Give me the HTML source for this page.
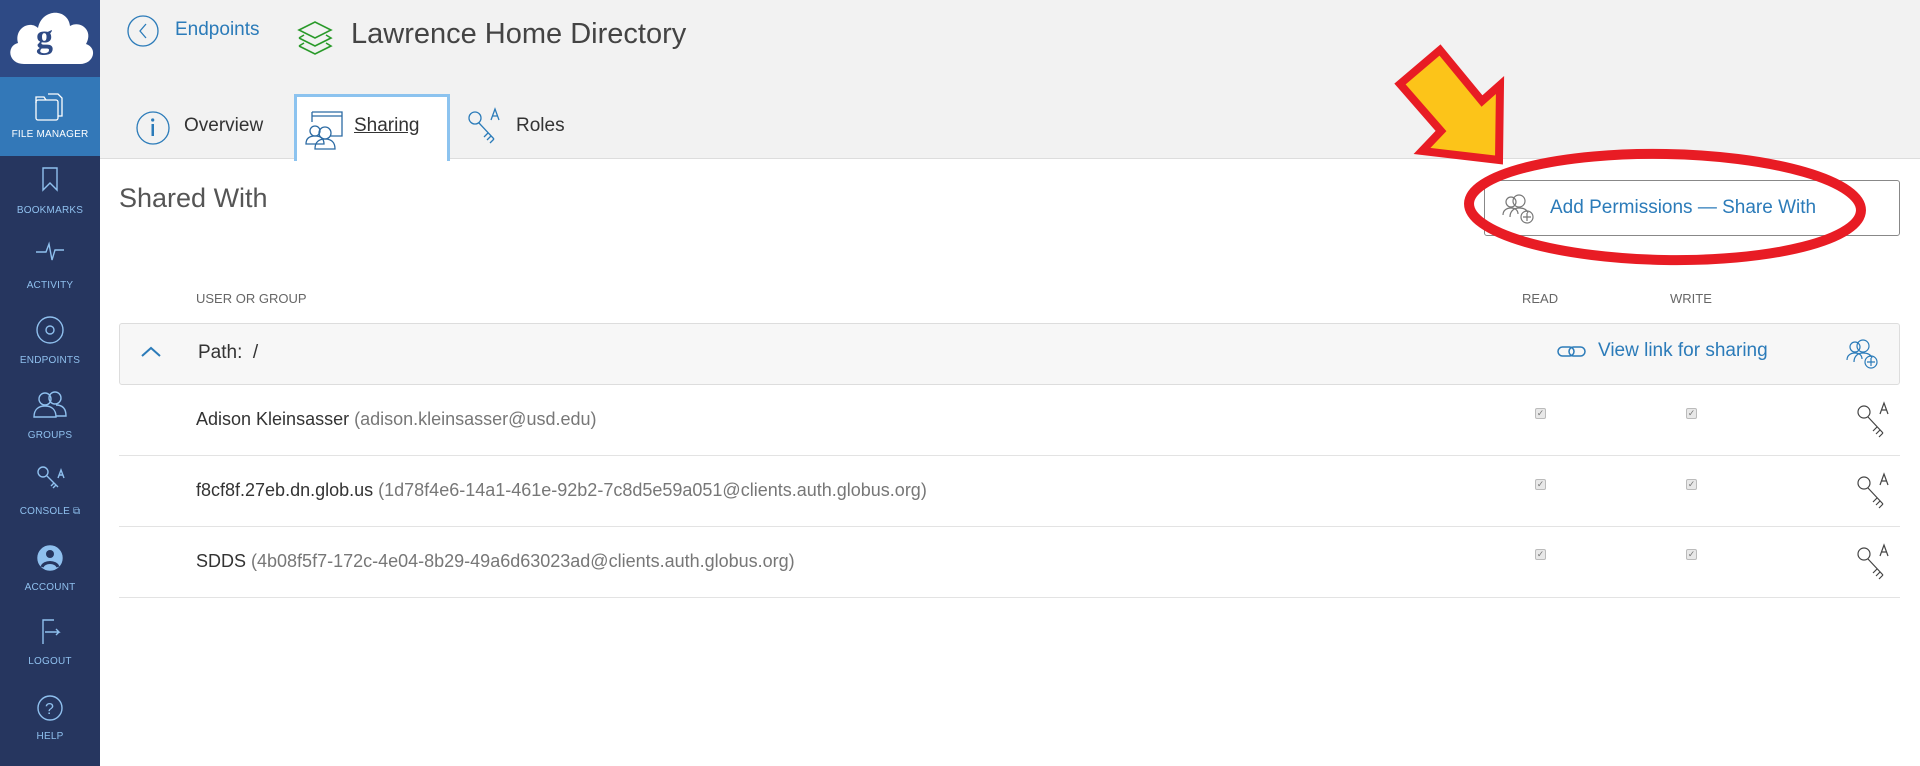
<!DOCTYPE html>
<html><head><meta charset="utf-8"><style>
*{box-sizing:border-box;margin:0;padding:0}
body{width:1920px;height:766px;overflow:hidden;font-family:"Liberation Sans",sans-serif;background:#fff;position:relative;color:#333}
.abs{position:absolute}
#sb{left:0;top:0;width:100px;height:766px;background:#26365f}
#logo{left:0;top:0;width:100px;height:77px;background:#2e4a85}
#fm{left:0;top:77px;width:100px;height:79px;background:#3378b8}
.lab{position:absolute;left:0;width:100px;text-align:center;font-size:10px;color:#8fc0ee;letter-spacing:.2px}
#hdr{left:100px;top:0;width:1820px;height:159px;background:#f2f2f2;border-bottom:1px solid #ddd}
.blue{color:#2b7bb9}
.row{position:absolute;left:119px;width:1781px;border-bottom:1px solid #e3e3e3;height:71px}
.row .n{position:absolute;left:77px;top:24px;font-size:18px;color:#333}
.row .n span{color:#777}
.cb{position:absolute;width:11px;height:11px;border:1px solid #bbb;background:#e8e8e8;border-radius:2px;font-size:9px;line-height:9px;text-align:center;color:#777}
</style></head><body>
<div id="sb" class="abs"></div>
<div id="logo" class="abs"><svg width="100" height="77"><path d="M24 64 C8 64 6 46 18 43 C14 28 30 20 38 28 C42 8 68 8 70 26 C80 20 94 30 86 44 C98 48 94 64 80 64 Z" fill="#fff"/><text x="36" y="48" font-family="Liberation Serif" font-size="34" font-weight="bold" fill="#2e4a85">g</text></svg></div>
<div id="fm" class="abs"><svg class="abs" style="left:34px;top:14px" width="32" height="32" fill="none" stroke="#fff" stroke-width="1.3"><rect x="2" y="9" width="22" height="20" rx="2"/><path d="M2 12 V6 h8 l2 3 M14 3 h10 l4 4 v18 h-4"/></svg><div class="lab" style="top:52px;color:#fff;font-size:10px">FILE MANAGER</div></div>
<svg class="abs" style="left:0;top:160px" width="100" height="606" fill="none" stroke="#8fc0ee" stroke-width="1.4">
<path d="M43 8 v22 l7 -7 l7 7 v-22 z"/>
<path d="M36 92 h10 l3 -8 l3 16 l3 -10 h9"/>
<circle cx="50" cy="170" r="13"/><circle cx="50" cy="170" r="4"/>
<circle cx="45" cy="239" r="6"/><path d="M34 257 c0 -8 5 -11 11 -11 s11 3 11 11 z"/><circle cx="55" cy="238" r="6"/><path d="M56 245 c7 0 10 4 10 11 h-10"/>
<circle cx="43" cy="312" r="5"/><path d="M47 316 l11 11 m-4 -4 l-3 3 m5 -1 l-3 3"/><path d="M58 318 l3 -8 l3 8 m-5 -3 h4"/>
<circle cx="50" cy="398" r="12" fill="#8fc0ee"/><circle cx="50" cy="394" r="4" fill="#26365f" stroke="none"/><path d="M42 407 c2 -6 14 -6 16 0" stroke="#26365f" stroke-width="3"/>
<path d="M54 460 h-11 v24 M45 472 h14 l-3 -3 m3 3 l-3 3"/>
<circle cx="50" cy="548" r="12"/><text x="45" y="554" fill="#8fc0ee" stroke="none" font-size="16" font-family="Liberation Sans">?</text>
</svg>
<div class="lab" style="top:205px">BOOKMARKS</div>
<div class="lab" style="top:280px">ACTIVITY</div>
<div class="lab" style="top:355px">ENDPOINTS</div>
<div class="lab" style="top:430px">GROUPS</div>
<div class="lab" style="top:506px">CONSOLE ⧉</div>
<div class="lab" style="top:582px">ACCOUNT</div>
<div class="lab" style="top:656px">LOGOUT</div>
<div class="lab" style="top:731px">HELP</div>

<div id="hdr" class="abs"></div>
<svg class="abs" style="left:127px;top:14px" width="36" height="36"><circle cx="16" cy="17" r="15" fill="none" stroke="#2b7bb9" stroke-width="1.3"/><path d="M19 10 l-6 7 l6 7" fill="none" stroke="#2b7bb9" stroke-width="1.3"/></svg>
<div class="abs blue" style="left:175px;top:19px;font-size:19px">Endpoints</div>
<svg class="abs" style="left:296px;top:20px" width="38" height="38" fill="none" stroke="#2a9a2a" stroke-width="1.6"><path d="M3 10 l16 -8 l16 8 l-16 8z M3 18 l16 8 l16 -8 l-5-3 M3 18 l5 -3 M3 26 l16 8 l16 -8 l-5-3 M3 26 l5-3"/></svg>
<div class="abs" style="left:351px;top:18px;font-size:29px;color:#444">Lawrence Home Directory</div>

<svg class="abs" style="left:135px;top:110px" width="36" height="36"><circle cx="18" cy="18" r="16" fill="none" stroke="#2b7bb9" stroke-width="1.3"/><rect x="16.5" y="14" width="2.5" height="12" fill="#2b7bb9"/><circle cx="17.7" cy="10" r="1.6" fill="#2b7bb9"/></svg>
<div class="abs" style="left:184px;top:115px;font-size:19px;color:#333">Overview</div>
<div class="abs" style="left:294px;top:94px;width:156px;height:67px;background:#fff;border:3px solid #8cc3ef;border-bottom:none"></div>
<svg class="abs" style="left:303px;top:108px" width="42" height="42" fill="none" stroke="#2b6aa3" stroke-width="1.3"><path d="M9 4 h30 v24 h-12 M9 4 v10 M9 8 h30"/><circle cx="12" cy="23" r="5"/><path d="M3 36 c0-6 4-8 9-8 s9 2 9 8z"/><circle cx="22" cy="25" r="6"/><path d="M12 41 c0-7 4-10 10-10 s10 3 10 10z"/></svg>
<div class="abs" style="left:354px;top:115px;font-size:19px;color:#333;text-decoration:underline">Sharing</div>
<svg class="abs" style="left:466px;top:106px" width="40" height="44" fill="none" stroke="#2b7bb9" stroke-width="1.3"><circle cx="9" cy="12" r="6"/><path d="M13 17 l15 16 m-6 -6 l-4 4 m7 -1 l-4 4 m7 -1 l-4 4"/><path d="M25 14 l4 -11 l4 11 m-6 -4 h5"/></svg>
<div class="abs" style="left:516px;top:115px;font-size:19px;color:#333">Roles</div>

<div class="abs" style="left:119px;top:183px;font-size:27px;color:#555">Shared With</div>
<div class="abs" style="left:1484px;top:180px;width:416px;height:56px;border:1px solid #888;border-radius:3px"></div>
<svg class="abs" style="left:1502px;top:193px" width="34" height="32" fill="none" stroke="#777" stroke-width="1.2"><circle cx="9" cy="9" r="5"/><path d="M1 22 c0-5 4-7 8-7 s7 2 7 6"/><circle cx="17" cy="8" r="6"/><path d="M8 24 c0-6 4-9 9-9 s8 2 9 5"/><circle cx="25" cy="24" r="6"/><path d="M25 20 v8 M21 24 h8"/></svg>
<div class="abs blue" style="left:1550px;top:197px;font-size:19px">Add Permissions — Share With</div>

<svg class="abs" style="left:0;top:0" width="1920" height="766" fill="none">
<ellipse cx="1665" cy="207" rx="196" ry="53" stroke="#e81c24" stroke-width="10" transform="rotate(1 1665 207)"/>
<path d="M1400 84 L1440 50 L1482 101 L1500 85 L1499 160 L1422 151 L1441 131 Z" fill="#fcc419" stroke="#e81c24" stroke-width="8" stroke-linejoin="miter"/>
</svg>

<div class="abs" style="left:196px;top:291px;font-size:13px;color:#666">USER OR GROUP</div>
<div class="abs" style="left:1522px;top:291px;font-size:13px;color:#666">READ</div>
<div class="abs" style="left:1670px;top:291px;font-size:13px;color:#666">WRITE</div>

<div class="abs" style="left:119px;top:323px;width:1781px;height:62px;background:#f7f7f7;border:1px solid #ddd;border-radius:3px"></div>
<svg class="abs" style="left:140px;top:345px" width="22" height="14"><path d="M2 11 l9 -8 l9 8" fill="none" stroke="#2b7bb9" stroke-width="2"/></svg>
<div class="abs" style="left:198px;top:342px;font-size:19px;color:#333">Path:&nbsp; /</div>
<svg class="abs" style="left:1556px;top:342px" width="32" height="18" fill="none" stroke="#2b7bb9" stroke-width="1.5"><rect x="2" y="5" width="16" height="9" rx="4.5"/><rect x="13" y="5" width="16" height="9" rx="4.5"/></svg>
<div class="abs blue" style="left:1598px;top:340px;font-size:19px">View link for sharing</div>
<svg class="abs" style="left:1846px;top:338px" width="34" height="32" fill="none" stroke="#2b7bb9" stroke-width="1.2"><circle cx="9" cy="9" r="5"/><path d="M1 22 c0-5 4-7 8-7 s7 2 7 6"/><circle cx="17" cy="8" r="6"/><path d="M8 24 c0-6 4-9 9-9 s8 2 9 5"/><circle cx="25" cy="24" r="6"/><path d="M25 20 v8 M21 24 h8"/></svg>

<div class="row" style="top:385px"><div class="n">Adison Kleinsasser <span>(adison.kleinsasser@usd.edu)</span></div></div>
<div class="row" style="top:456px"><div class="n">f8cf8f.27eb.dn.glob.us <span>(1d78f4e6-14a1-461e-92b2-7c8d5e59a051@clients.auth.globus.org)</span></div></div>
<div class="row" style="top:527px"><div class="n">SDDS <span>(4b08f5f7-172c-4e04-8b29-49a6d63023ad@clients.auth.globus.org)</span></div></div>

<div class="cb" style="left:1535px;top:408px">✓</div><div class="cb" style="left:1686px;top:408px">✓</div>
<div class="cb" style="left:1535px;top:479px">✓</div><div class="cb" style="left:1686px;top:479px">✓</div>
<div class="cb" style="left:1535px;top:549px">✓</div><div class="cb" style="left:1686px;top:549px">✓</div>
<svg class="abs" style="left:1855px;top:400px" width="40" height="190" fill="none" stroke="#444" stroke-width="1.2">
<g><circle cx="9" cy="12" r="6"/><path d="M13 17 l15 16 m-6 -6 l-4 4 m7 -1 l-4 4 m7 -1 l-4 4"/><path d="M25 14 l4 -11 l4 11 m-6 -4 h5"/></g>
<g transform="translate(0,71)"><circle cx="9" cy="12" r="6"/><path d="M13 17 l15 16 m-6 -6 l-4 4 m7 -1 l-4 4 m7 -1 l-4 4"/><path d="M25 14 l4 -11 l4 11 m-6 -4 h5"/></g>
<g transform="translate(0,142)"><circle cx="9" cy="12" r="6"/><path d="M13 17 l15 16 m-6 -6 l-4 4 m7 -1 l-4 4 m7 -1 l-4 4"/><path d="M25 14 l4 -11 l4 11 m-6 -4 h5"/></g>
</svg>
</body></html>
